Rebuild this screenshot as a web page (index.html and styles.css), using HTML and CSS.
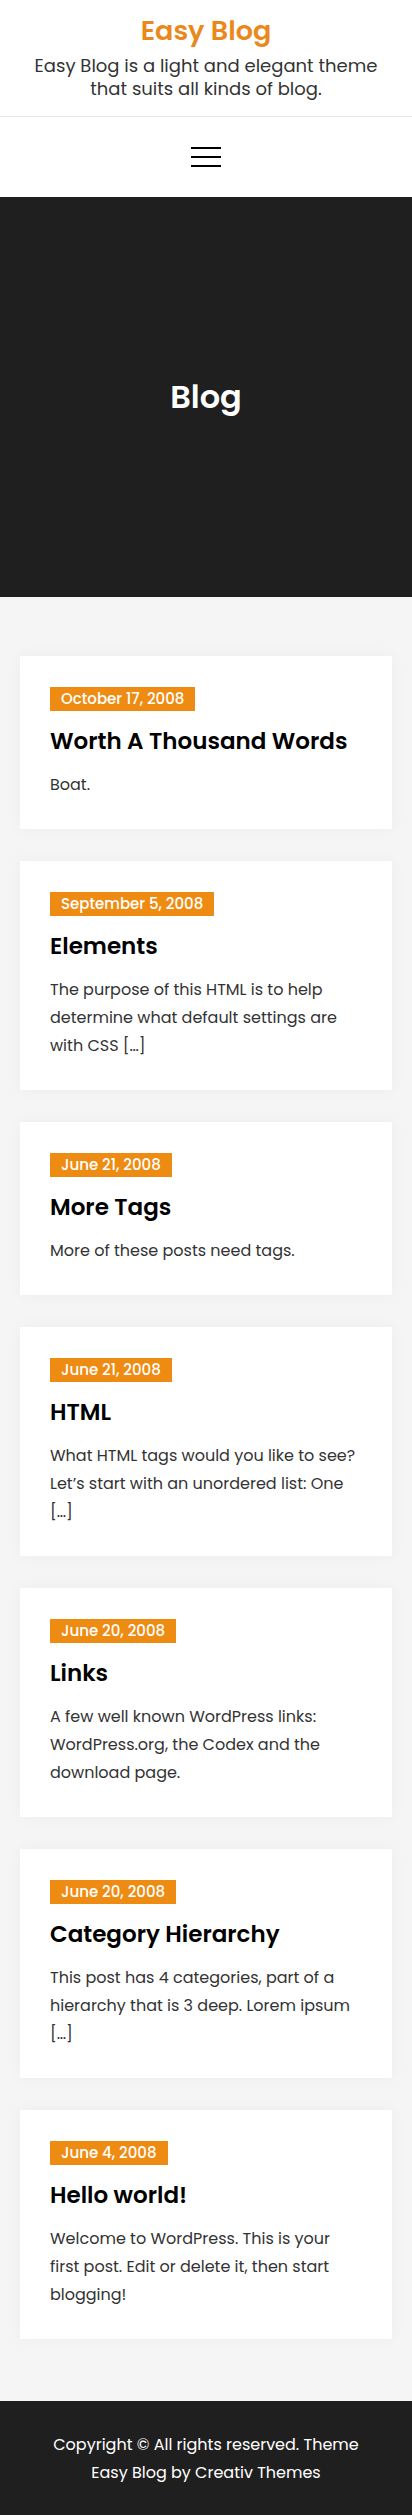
FILE: index.html
```html
<!DOCTYPE html>
<html lang="en">
<head>
<meta charset="utf-8">
<meta name="viewport" content="width=device-width, initial-scale=1">
<title>Blog – Easy Blog</title>
<link rel="stylesheet" href="styles.css">
</head>
<body>
<header class="site-header">
  <div class="branding">
    <p class="site-title">Easy Blog</p>
    <p class="site-description">Easy Blog is a light and elegant theme that suits all kinds of blog.</p>
  </div>
</header>
<nav class="main-nav">
  <button class="menu-toggle" aria-label="Menu">
    <span class="bar"></span>
    <span class="bar"></span>
    <span class="bar"></span>
  </button>
</nav>
<section class="page-hero">
  <h1 class="page-title">Blog</h1>
</section>
<main class="posts">
  <article class="post-card">
    <span class="post-date">October 17, 2008</span>
    <h2 class="post-title">Worth A Thousand Words</h2>
    <p class="post-excerpt">Boat.</p>
  </article>
  <article class="post-card">
    <span class="post-date">September 5, 2008</span>
    <h2 class="post-title">Elements</h2>
    <p class="post-excerpt">The purpose of this HTML is to help determine what default settings are with CSS […]</p>
  </article>
  <article class="post-card">
    <span class="post-date">June 21, 2008</span>
    <h2 class="post-title">More Tags</h2>
    <p class="post-excerpt">More of these posts need tags.</p>
  </article>
  <article class="post-card">
    <span class="post-date">June 21, 2008</span>
    <h2 class="post-title">HTML</h2>
    <p class="post-excerpt">What HTML tags would you like to see? Let’s start with an unordered list: One […]</p>
  </article>
  <article class="post-card">
    <span class="post-date">June 20, 2008</span>
    <h2 class="post-title">Links</h2>
    <p class="post-excerpt">A few well known WordPress links: WordPress.org, the Codex and the download page.</p>
  </article>
  <article class="post-card">
    <span class="post-date">June 20, 2008</span>
    <h2 class="post-title">Category Hierarchy</h2>
    <p class="post-excerpt">This post has 4 categories, part of a hierarchy that is 3 deep. Lorem ipsum […]</p>
  </article>
  <article class="post-card">
    <span class="post-date">June 4, 2008</span>
    <h2 class="post-title">Hello world!</h2>
    <p class="post-excerpt">Welcome to WordPress. This is your first post. Edit or delete it, then start blogging!</p>
  </article>
</main>
<footer class="site-footer">
  <p class="copyright">Copyright © All rights reserved. Theme Easy Blog by Creativ Themes</p>
</footer>
</body>
</html>
```
FILE: styles.css
```css
* {
  box-sizing: border-box;
}

body {
  margin: 0;
  font-family: "Poppins", "Open Sans", sans-serif;
  color: #333;
  background: #fff;
}

p {
  margin: 0;
}

.site-header {
  padding: 14px 20px 16px;
  border-bottom: 1px solid #e6e6e6;
  text-align: center;
}

.site-title {
  font-size: 27px;
  line-height: 34px;
  font-weight: 600;
  color: #e9891c;
}

.site-description {
  margin-top: 7px;
  font-size: 18px;
  line-height: 22.5px;
  color: #333;
}

.main-nav {
  height: 80px;
  display: flex;
  align-items: center;
  justify-content: center;
}

.menu-toggle {
  display: flex;
  flex-direction: column;
  gap: 7px;
  width: 30px;
  padding: 0;
  border: 0;
  background: none;
}

.bar {
  display: block;
  width: 30px;
  height: 2px;
  background: #000;
}

.page-hero {
  height: 400px;
  background: #1f1f1f;
  display: flex;
  align-items: center;
  justify-content: center;
}

.page-title {
  margin: 0;
  font-size: 32px;
  font-weight: 600;
  color: #fff;
}

.posts {
  background: #f5f5f5;
  padding: 59px 20px 30px;
}

.post-card {
  background: #fff;
  padding: 30px 30px 30px;
  margin-bottom: 32px;
  box-shadow: 0 0 15px rgba(0, 0, 0, 0.04);
}

.post-date {
  display: inline-block;
  background: #ee8b13;
  color: #fff;
  font-size: 15px;
  line-height: 24px;
  font-weight: 500;
  padding: 0 11px;
}

.post-title {
  margin: 14.5px 0;
  font-size: 23px;
  line-height: 31px;
  font-weight: 600;
  color: #000;
}

.post-excerpt {
  font-size: 16px;
  line-height: 28px;
  color: #333;
}

.site-footer {
  background: #1f1f1f;
  padding: 30px 40px;
  text-align: center;
}

.copyright {
  font-size: 16px;
  line-height: 28px;
  color: #fff;
}
```
